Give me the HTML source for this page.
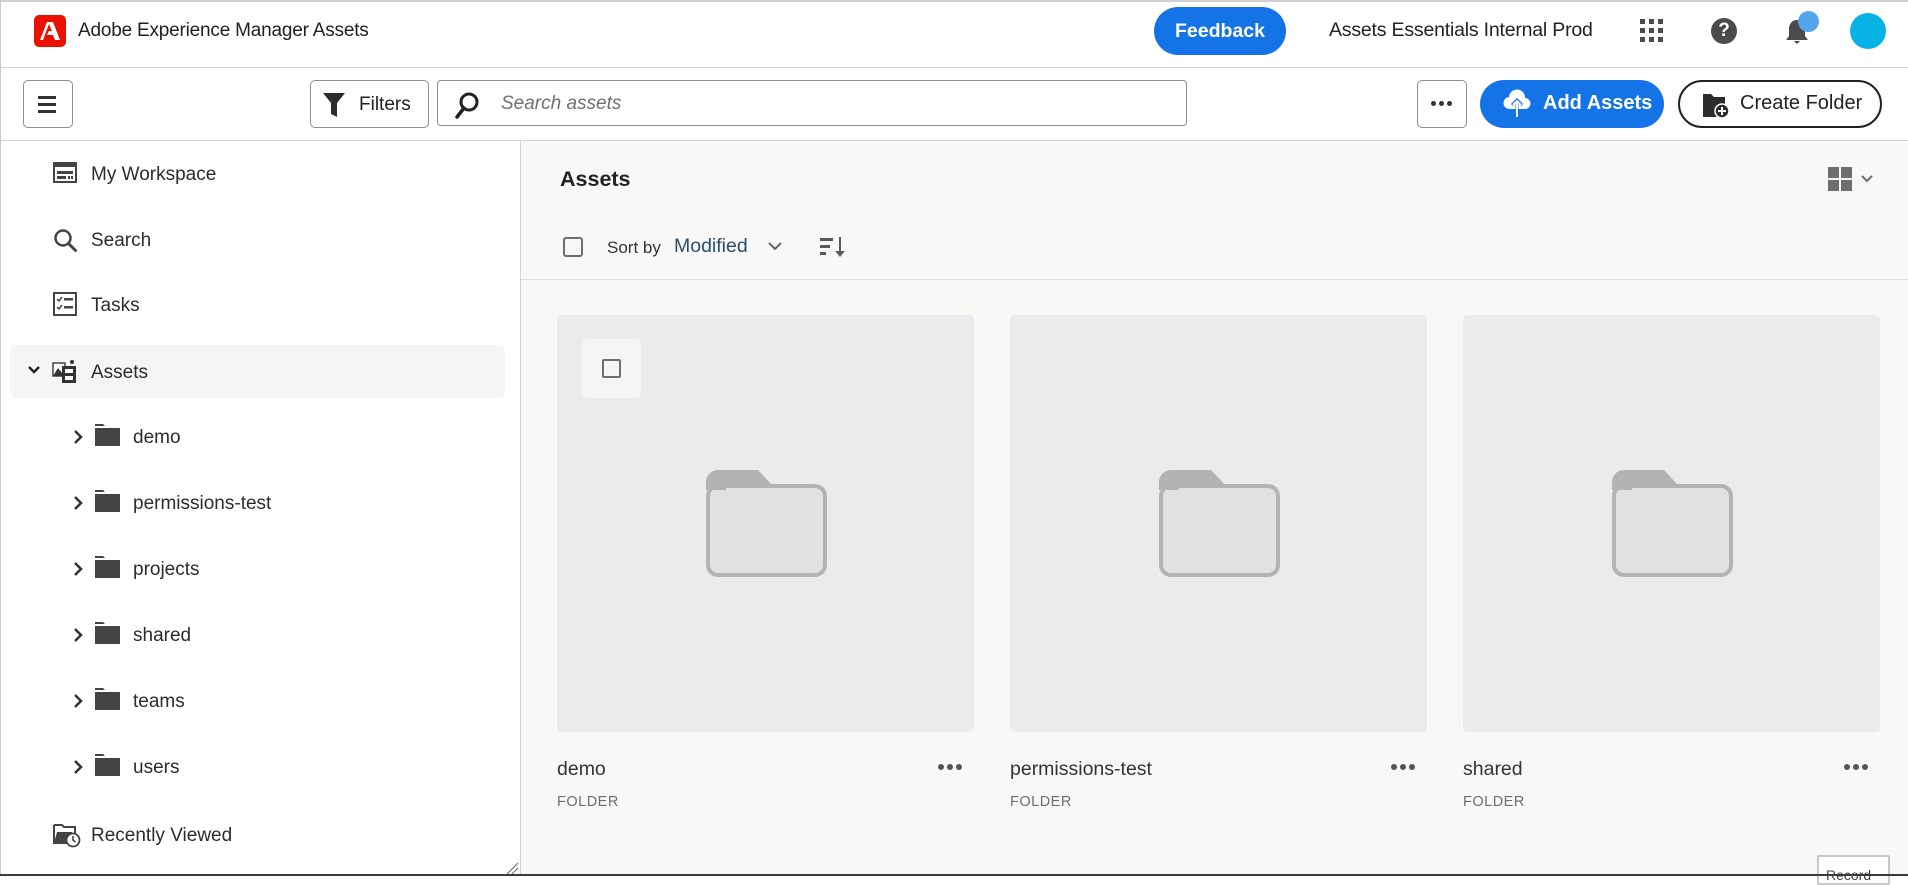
<!DOCTYPE html>
<html><head><meta charset="utf-8"><style>
*{box-sizing:border-box;margin:0;padding:0}
body{width:1908px;height:876px;overflow:hidden;background:#fff;font-family:"Liberation Sans",sans-serif;color:#2c2c2c;position:relative}
.a{position:absolute}
.t{white-space:nowrap;line-height:1}
</style></head><body>
<div class="a" style="left:0;top:0;width:1908px;height:2px;background:#d0d0d0"></div>
<div class="a" style="left:0;top:0;width:1px;height:876px;background:#c8c8c8"></div>
<div class="a" style="left:34px;top:15px;width:32px;height:32px;background:#eb1000;border-radius:5px"></div>
<svg class="a" style="left:34px;top:15px" width="32" height="32" viewBox="0 0 32 32"><path d="M13 7h6l7 18h-5l-2-5h-6l2-4h3l-3-7-6 16H6z" fill="#fff"/></svg>
<div class="a t" style="left:78px;top:21px;font-size:19px;letter-spacing:-0.2px;color:#222">Adobe Experience Manager Assets</div>
<div class="a" style="left:1154px;top:7px;width:132px;height:48px;border-radius:24px;background:#1473e6"></div>
<div class="a t" style="left:1154px;top:22px;width:132px;text-align:center;font-size:19.5px;font-weight:bold;color:#fff">Feedback</div>
<div class="a t" style="left:1329px;top:21px;font-size:19.5px;letter-spacing:-0.2px;color:#222">Assets Essentials Internal Prod</div>
<svg class="a" style="left:1640px;top:19px" width="24" height="24" viewBox="0 0 24 24" fill="#4b4b4b"><rect x="0" y="0" width="5" height="5"/><rect x="9" y="0" width="5" height="5"/><rect x="18" y="0" width="5" height="5"/><rect x="0" y="9" width="5" height="5"/><rect x="9" y="9" width="5" height="5"/><rect x="18" y="9" width="5" height="5"/><rect x="0" y="18" width="5" height="5"/><rect x="9" y="18" width="5" height="5"/><rect x="18" y="18" width="5" height="5"/></svg>
<div class="a" style="left:1711px;top:18px;width:26px;height:26px;border-radius:50%;background:#4b4b4b;color:#fff;font-weight:bold;font-size:19px;text-align:center;line-height:26px">?</div>
<svg class="a" style="left:1784px;top:18px" width="26" height="28" viewBox="0 0 26 28"><path d="M13 2c-5 0-8 4-8 9v7l-3 4h22l-3-4v-7c0-5-3-9-8-9z" fill="#4b4b4b"/><path d="M10 23h6l-3 3z" fill="#4b4b4b"/></svg>
<div class="a" style="left:1798px;top:11px;width:21px;height:21px;border-radius:50%;background:#55a5ec"></div>
<div class="a" style="left:1850px;top:13px;width:36px;height:36px;border-radius:50%;background:#07b2e6"></div>
<div class="a" style="left:0;top:67px;width:1908px;height:1px;background:#d4d4d4"></div>
<div class="a" style="left:23px;top:80px;width:50px;height:48px;border:1px solid #8e8e8e;border-radius:5px"></div>
<div class="a" style="left:38px;top:96px;width:18px;height:3px;background:#333;box-shadow:0 7px 0 #333,0 14px 0 #333"></div>
<div class="a" style="left:310px;top:80px;width:119px;height:48px;border:1px solid #8e8e8e;border-radius:5px"></div>
<svg class="a" style="left:322px;top:92px" width="24" height="26" viewBox="0 0 24 26"><path d="M1 1h22l-8 10v14l-6-3V11z" fill="#2c2c2c"/></svg>
<div class="a t" style="left:359px;top:95px;font-size:19px;color:#222">Filters</div>
<div class="a" style="left:437px;top:80px;width:750px;height:46px;border:1px solid #8e8e8e;border-radius:4px"></div>
<svg class="a" style="left:454px;top:91px" width="26" height="28" viewBox="0 0 26 28"><circle cx="15" cy="11" r="8" fill="none" stroke="#222" stroke-width="3"/><path d="M10 17L3 26" stroke="#222" stroke-width="3.5" stroke-linecap="round"/></svg>
<div class="a t" style="left:501px;top:94px;font-size:19px;font-style:italic;color:#707070">Search assets</div>
<div class="a" style="left:1417px;top:80px;width:50px;height:48px;border:1px solid #8e8e8e;border-radius:5px"></div>
<div class="a" style="left:1431px;top:101px;width:5px;height:5px;border-radius:50%;background:#333;box-shadow:8px 0 0 #333,16px 0 0 #333"></div>
<div class="a" style="left:1480px;top:80px;width:184px;height:48px;border-radius:24px;background:#1473e6"></div>
<svg class="a" style="left:1502px;top:88px" width="30" height="30" viewBox="0 0 30 30"><path d="M8 21a6 6 0 0 1-1-12 8 8 0 0 1 16 1 5.5 5.5 0 0 1 0 11z" fill="#fff"/><path d="M15 28V13M10 17l5-5 5 5" stroke="#1473e6" stroke-width="3" fill="none"/><path d="M15 29V14M11 17l4-4 4 4" stroke="#fff" stroke-width="2" fill="none"/></svg>
<div class="a t" style="left:1543px;top:93px;font-size:20px;font-weight:bold;color:#fff">Add Assets</div>
<div class="a" style="left:1678px;top:80px;width:204px;height:48px;border-radius:24px;border:2.5px solid #222"></div>
<svg class="a" style="left:1702px;top:89px" width="28" height="30" viewBox="0 0 28 30"><path d="M1 5h8l3 3h11v20H1z" fill="#2c2c2c"/><circle cx="20" cy="22" r="7" fill="#2c2c2c" stroke="#fff" stroke-width="1.5"/><path d="M20 18v8M16 22h8" stroke="#fff" stroke-width="2"/></svg>
<div class="a t" style="left:1740px;top:93px;font-size:20px;color:#222">Create Folder</div>
<div class="a" style="left:0;top:140px;width:1908px;height:1px;background:#d4d4d4"></div>
<div class="a" style="left:520px;top:141px;width:1px;height:735px;background:#d4d4d4"></div>
<div class="a" style="left:10px;top:345px;width:495px;height:53px;border-radius:6px;background:#f5f5f5"></div>
<svg class="a" style="left:53px;top:162px" width="24" height="22" viewBox="0 0 24 22"><rect x="1" y="1" width="22" height="19" fill="none" stroke="#444" stroke-width="2"/><rect x="1" y="1" width="22" height="4" fill="#444"/><rect x="4" y="9" width="16" height="3" fill="#444"/><rect x="4" y="14" width="9" height="3" fill="#444"/><rect x="15" y="14" width="2" height="3" fill="#444"/><rect x="18" y="14" width="2" height="3" fill="#444"/></svg>
<div class="a t" style="left:91px;top:165px;font-size:19px">My Workspace</div>
<svg class="a" style="left:53px;top:228px" width="26" height="26" viewBox="0 0 26 26"><circle cx="10" cy="10" r="7.5" fill="none" stroke="#444" stroke-width="2.5"/><path d="M15.5 15.5l7 7" stroke="#444" stroke-width="3" stroke-linecap="round"/></svg>
<div class="a t" style="left:91px;top:231px;font-size:19px">Search</div>
<svg class="a" style="left:53px;top:292px" width="24" height="24" viewBox="0 0 24 24"><rect x="1" y="1" width="22" height="22" fill="none" stroke="#444" stroke-width="2"/><path d="M4 7l2 2 3-4M4 15l2 2 3-4" stroke="#444" stroke-width="1.5" fill="none"/><rect x="11" y="6" width="9" height="2.5" fill="#444"/><rect x="11" y="14" width="9" height="2.5" fill="#444"/></svg>
<div class="a t" style="left:91px;top:296px;font-size:19px">Tasks</div>
<svg class="a" style="left:27px;top:365px" width="14" height="10" viewBox="0 0 14 10"><path d="M2 2l5 5 5-5" stroke="#222" stroke-width="2.5" fill="none"/></svg>
<svg class="a" style="left:52px;top:358px" width="26" height="26" viewBox="0 0 26 26"><path d="M1 5h12v13H1z" fill="#fff" stroke="#444" stroke-width="1.5"/><path d="M1 18l5-8 4 5 3-3v6z" fill="#333"/><rect x="10" y="8" width="14" height="17" fill="#333"/><rect x="13" y="11" width="8" height="4" fill="#fff"/><rect x="13" y="18" width="8" height="4" fill="#fff"/><circle cx="20" cy="4" r="2" fill="#333"/></svg>
<div class="a t" style="left:91px;top:363px;font-size:19px">Assets</div>
<div id="tree"></div>
<svg class="a" style="left:53px;top:822px" width="28" height="26" viewBox="0 0 28 26"><path d="M1 3h8l2 2h11v8" fill="none" stroke="#444" stroke-width="2"/><path d="M1 3v18h14" fill="none" stroke="#444" stroke-width="2"/><path d="M1 21l3-11h15v11z" fill="#444"/><circle cx="20" cy="18" r="6.5" fill="#fff" stroke="#444" stroke-width="1.8"/><path d="M20 14v4l2.5 2" stroke="#444" stroke-width="1.6" fill="none"/></svg>
<div class="a t" style="left:91px;top:826px;font-size:19px">Recently Viewed</div>
<svg class="a" style="left:505px;top:862px" width="14" height="12" viewBox="0 0 14 12"><path d="M2 12L13 1M7 12l6-6" stroke="#666" stroke-width="1"/></svg>
<div class="a" style="left:521px;top:141px;width:1387px;height:735px;background:#f8f8f7"></div>
<div class="a t" style="left:560px;top:169px;font-size:21.5px;font-weight:bold;color:#222">Assets</div>
<svg class="a" style="left:1828px;top:167px" width="24" height="24" viewBox="0 0 24 24" fill="#6e6e6e"><rect x="0" y="0" width="11" height="11"/><rect x="13" y="0" width="11" height="11"/><rect x="0" y="13" width="11" height="11"/><rect x="13" y="13" width="11" height="11"/></svg>
<svg class="a" style="left:1860px;top:174px" width="14" height="10" viewBox="0 0 14 10"><path d="M2 2l5 5 5-5" stroke="#6e6e6e" stroke-width="2" fill="none"/></svg>
<div class="a" style="left:563px;top:237px;width:20px;height:20px;border:2px solid #6e6e6e;border-radius:3px"></div>
<div class="a t" style="left:607px;top:239px;font-size:17px;color:#333">Sort by</div>
<div class="a t" style="left:674px;top:237px;font-size:19.5px;color:#2c4e6e">Modified</div>
<svg class="a" style="left:767px;top:241px" width="16" height="12" viewBox="0 0 16 12"><path d="M2 2l6 6 6-6" stroke="#666" stroke-width="2" fill="none"/></svg>
<svg class="a" style="left:820px;top:236px" width="28" height="22" viewBox="0 0 28 22" fill="#5a5a5a"><rect x="0" y="2" width="13" height="3"/><rect x="0" y="9" width="10" height="3"/><rect x="0" y="16" width="6" height="3"/><rect x="19" y="1" width="2" height="18"/><path d="M15 15l5 6 5-6z"/></svg>
<div class="a" style="left:521px;top:279px;width:1387px;height:1px;background:#dedede"></div>
<div id="cards"></div>
<div class="a" style="left:1817px;top:855px;width:73px;height:30px;background:#fff;border:2px solid #c8c8c8;border-radius:2px"></div>
<div class="a t" style="left:1826px;top:868px;font-size:14px;color:#444">Record</div>
<div class="a" style="left:0;top:874px;width:1908px;height:2px;background:#3a3a3a"></div>
<script>
var names=["demo","permissions-test","projects","shared","teams","users"],h="";
names.forEach(function(n,i){var y=438+i*66;
h+='<svg class="a" style="left:73px;top:'+(y-9)+'px" width="10" height="16" viewBox="0 0 10 16"><path d="M2 2l6 6-6 6" stroke="#333" stroke-width="2.5" fill="none"/></svg>'+
'<svg class="a" style="left:95px;top:'+(y-14)+'px" width="25" height="22" viewBox="0 0 25 22"><path d="M0 0h8l2 2H0z" fill="#444"/><rect x="0" y="4" width="25" height="18" fill="#444"/></svg>'+
'<div class="a t" style="left:133px;top:'+(y-10)+'px;font-size:19px">'+n+'</div>';});
document.getElementById("tree").outerHTML=h;
var c=["demo","permissions-test","shared"],g="";
c.forEach(function(n,i){var x=557+i*453;
g+='<div class="a" style="left:'+x+'px;top:315px;width:417px;height:417px;border-radius:5px;background:#ebebeb"></div>'+
'<svg class="a" style="left:'+(x+149)+'px;top:470px" width="121" height="107" viewBox="0 0 121 107"><path d="M0 12a12 12 0 0 1 12-12h40l14 15H0z" fill="#b3b3b3"/><rect x="2" y="16" width="117" height="89" rx="10" fill="#e1e1e1" stroke="#b3b3b3" stroke-width="4"/><rect x="0" y="10" width="20" height="10" fill="#b3b3b3"/></svg>'+
'<div class="a t" style="left:'+x+'px;top:760px;font-size:19.5px;color:#333">'+n+'</div>'+
'<div class="a t" style="left:'+x+'px;top:795px;font-size:14.5px;letter-spacing:0.5px;color:#6e6e6e">FOLDER</div>'+
'<div class="a" style="left:'+(x+381)+'px;top:764px;width:6px;height:6px;border-radius:50%;background:#555;box-shadow:9px 0 0 #555,18px 0 0 #555"></div>';});
g+='<div class="a" style="left:582px;top:339px;width:59px;height:59px;border-radius:5px;background:#f5f5f5"></div><div class="a" style="left:602px;top:359px;width:19px;height:19px;border:2px solid #6e6e6e;border-radius:2px"></div>';
document.getElementById("cards").outerHTML=g;
</script>
</body></html>
